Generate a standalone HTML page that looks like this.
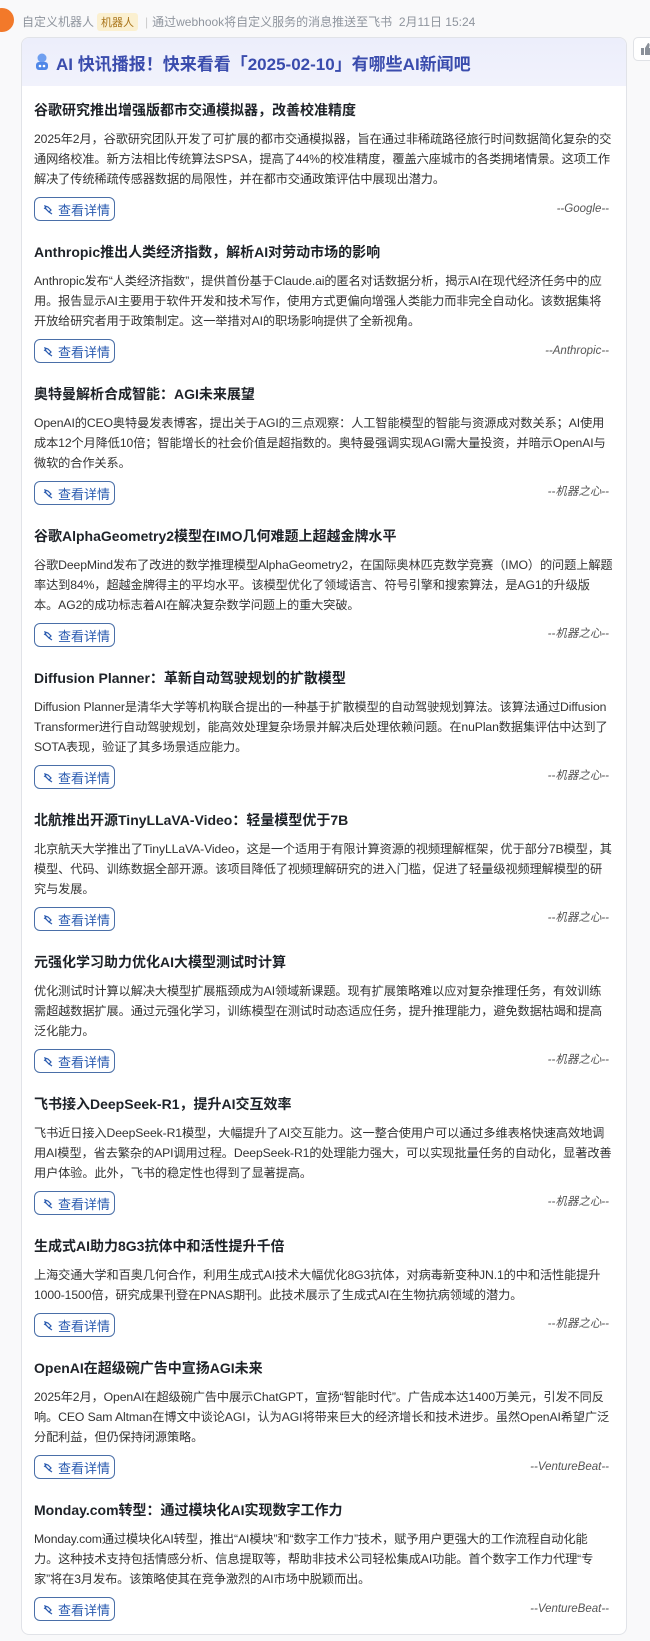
<!DOCTYPE html>
<html><head><meta charset="utf-8">
<style>
*{margin:0;padding:0;box-sizing:border-box}
body{width:650px;height:1641px;background:#f9f9fa;font-family:"Liberation Sans","Noto Sans CJK SC",sans-serif;position:relative;overflow:hidden;color:#1f2329}
.avatar{position:absolute;left:-10px;top:8px;width:24px;height:24px;border-radius:50%;background:#f2792a}
.meta{position:absolute;left:22px;top:13px;font-size:12px;color:#8f959e;white-space:nowrap}
.tag{display:inline-block;background:#fbf0d0;color:#a9741a;font-size:11px;padding:1px 4px;border-radius:3px;margin:0 3px}
.sep{color:#ccc;margin:0 4px}
.thumb{position:absolute;left:633px;top:37px;width:30px;height:24px;border:1px solid #e0e2e6;border-radius:5px;background:#fff}
.card{position:absolute;left:21px;top:37px;width:606px;height:1598px;background:#fff;border:1px solid #e1e3e8;border-radius:8px;overflow:hidden}
.hd{height:48px;background:linear-gradient(180deg,#eceefb,#f1f2fc);display:flex;align-items:center;padding-left:12px;font-size:17px;font-weight:bold;color:#3a4cad;white-space:nowrap}
.hd svg{margin-right:6px}
.ct{padding:15px 12px 0 12px}
.it{position:relative;margin-bottom:22px}
.t{font-size:14px;font-weight:bold;line-height:18px;white-space:nowrap;color:#1f2329}
.b{margin-top:10px;font-size:12.2px;line-height:20px;color:#333;white-space:nowrap;letter-spacing:-0.1px}
.btn{margin-top:8px;width:81px;height:24px;border:1px solid #4a6fa8;border-radius:6px;font-size:13px;display:flex;align-items:center;padding-left:8px;color:#2a5bb0}
.btn svg{margin-right:4px}
.src{position:absolute;right:5px;bottom:6px;font-size:11.5px;font-style:italic;color:#555}
</style></head><body>
<div class="avatar"></div>
<div class="meta">自定义机器人<span class="tag">机器人</span><span class="sep">|</span>通过webhook将自定义服务的消息推送至飞书&nbsp; 2月11日 15:24</div>
<div class="thumb"><svg width="14" height="14" viewBox="0 0 14 14" style="position:absolute;left:6px;top:4px"><path d="M1 6h3v7H1zM5 6l3-5c1 0 2 1 1.5 3L9 6h3.5c1 0 1.5 1 1.2 2l-1.5 4.5c-.2.5-.7.5-1.2.5H5z" fill="#8a9099"/></svg></div>
<div class="card">
<div class="hd"><svg width="16" height="18" viewBox="0 0 16 18"><circle cx="8" cy="5" r="4.5" fill="#6f9ff0"/><rect x="2" y="9" width="12" height="8" rx="3" fill="#4f87e8"/><circle cx="6" cy="13" r="1.3" fill="#fff"/><circle cx="10" cy="13" r="1.3" fill="#fff"/></svg>AI 快讯播报！快来看看「2025-02-10」有哪些AI新闻吧</div>
<div class="ct">

<div class="it"><div class="t">谷歌研究推出增强版都市交通模拟器，改善校准精度</div><div class="b">2025年2月，谷歌研究团队开发了可扩展的都市交通模拟器，旨在通过非稀疏路径旅行时间数据简化复杂的交<br>通网络校准。新方法相比传统算法SPSA，提高了44%的校准精度，覆盖六座城市的各类拥堵情景。这项工作<br>解决了传统稀疏传感器数据的局限性，并在都市交通政策评估中展现出潜力。</div><div class="btn"><svg width="11" height="11" viewBox="0 0 11 11" fill="none" stroke="#2a5bb0" stroke-width="1.2"><path d="M2 2l3 1 3 3-2 2-3-3zM6 8l3 2M3 5L1 4"/></svg>查看详情</div><div class="src">--Google--</div></div>

<div class="it"><div class="t">Anthropic推出人类经济指数，解析AI对劳动市场的影响</div><div class="b">Anthropic发布“人类经济指数”，提供首份基于Claude.ai的匿名对话数据分析，揭示AI在现代经济任务中的应<br>用。报告显示AI主要用于软件开发和技术写作，使用方式更偏向增强人类能力而非完全自动化。该数据集将<br>开放给研究者用于政策制定。这一举措对AI的职场影响提供了全新视角。</div><div class="btn"><svg width="11" height="11" viewBox="0 0 11 11" fill="none" stroke="#2a5bb0" stroke-width="1.2"><path d="M2 2l3 1 3 3-2 2-3-3zM6 8l3 2M3 5L1 4"/></svg>查看详情</div><div class="src">--Anthropic--</div></div>

<div class="it"><div class="t">奥特曼解析合成智能：AGI未来展望</div><div class="b">OpenAI的CEO奥特曼发表博客，提出关于AGI的三点观察：人工智能模型的智能与资源成对数关系；AI使用<br>成本12个月降低10倍；智能增长的社会价值是超指数的。奥特曼强调实现AGI需大量投资，并暗示OpenAI与<br>微软的合作关系。</div><div class="btn"><svg width="11" height="11" viewBox="0 0 11 11" fill="none" stroke="#2a5bb0" stroke-width="1.2"><path d="M2 2l3 1 3 3-2 2-3-3zM6 8l3 2M3 5L1 4"/></svg>查看详情</div><div class="src">--机器之心--</div></div>

<div class="it"><div class="t">谷歌AlphaGeometry2模型在IMO几何难题上超越金牌水平</div><div class="b">谷歌DeepMind发布了改进的数学推理模型AlphaGeometry2，在国际奥林匹克数学竞赛（IMO）的问题上解题<br>率达到84%，超越金牌得主的平均水平。该模型优化了领域语言、符号引擎和搜索算法，是AG1的升级版<br>本。AG2的成功标志着AI在解决复杂数学问题上的重大突破。</div><div class="btn"><svg width="11" height="11" viewBox="0 0 11 11" fill="none" stroke="#2a5bb0" stroke-width="1.2"><path d="M2 2l3 1 3 3-2 2-3-3zM6 8l3 2M3 5L1 4"/></svg>查看详情</div><div class="src">--机器之心--</div></div>

<div class="it"><div class="t">Diffusion Planner：革新自动驾驶规划的扩散模型</div><div class="b">Diffusion Planner是清华大学等机构联合提出的一种基于扩散模型的自动驾驶规划算法。该算法通过Diffusion<br>Transformer进行自动驾驶规划，能高效处理复杂场景并解决后处理依赖问题。在nuPlan数据集评估中达到了<br>SOTA表现，验证了其多场景适应能力。</div><div class="btn"><svg width="11" height="11" viewBox="0 0 11 11" fill="none" stroke="#2a5bb0" stroke-width="1.2"><path d="M2 2l3 1 3 3-2 2-3-3zM6 8l3 2M3 5L1 4"/></svg>查看详情</div><div class="src">--机器之心--</div></div>

<div class="it"><div class="t">北航推出开源TinyLLaVA-Video：轻量模型优于7B</div><div class="b">北京航天大学推出了TinyLLaVA-Video，这是一个适用于有限计算资源的视频理解框架，优于部分7B模型，其<br>模型、代码、训练数据全部开源。该项目降低了视频理解研究的进入门槛，促进了轻量级视频理解模型的研<br>究与发展。</div><div class="btn"><svg width="11" height="11" viewBox="0 0 11 11" fill="none" stroke="#2a5bb0" stroke-width="1.2"><path d="M2 2l3 1 3 3-2 2-3-3zM6 8l3 2M3 5L1 4"/></svg>查看详情</div><div class="src">--机器之心--</div></div>

<div class="it"><div class="t">元强化学习助力优化AI大模型测试时计算</div><div class="b">优化测试时计算以解决大模型扩展瓶颈成为AI领域新课题。现有扩展策略难以应对复杂推理任务，有效训练<br>需超越数据扩展。通过元强化学习，训练模型在测试时动态适应任务，提升推理能力，避免数据枯竭和提高<br>泛化能力。</div><div class="btn"><svg width="11" height="11" viewBox="0 0 11 11" fill="none" stroke="#2a5bb0" stroke-width="1.2"><path d="M2 2l3 1 3 3-2 2-3-3zM6 8l3 2M3 5L1 4"/></svg>查看详情</div><div class="src">--机器之心--</div></div>

<div class="it"><div class="t">飞书接入DeepSeek-R1，提升AI交互效率</div><div class="b">飞书近日接入DeepSeek-R1模型，大幅提升了AI交互能力。这一整合使用户可以通过多维表格快速高效地调<br>用AI模型，省去繁杂的API调用过程。DeepSeek-R1的处理能力强大，可以实现批量任务的自动化，显著改善<br>用户体验。此外，飞书的稳定性也得到了显著提高。</div><div class="btn"><svg width="11" height="11" viewBox="0 0 11 11" fill="none" stroke="#2a5bb0" stroke-width="1.2"><path d="M2 2l3 1 3 3-2 2-3-3zM6 8l3 2M3 5L1 4"/></svg>查看详情</div><div class="src">--机器之心--</div></div>

<div class="it"><div class="t">生成式AI助力8G3抗体中和活性提升千倍</div><div class="b">上海交通大学和百奥几何合作，利用生成式AI技术大幅优化8G3抗体，对病毒新变种JN.1的中和活性能提升<br>1000-1500倍，研究成果刊登在PNAS期刊。此技术展示了生成式AI在生物抗病领域的潜力。</div><div class="btn"><svg width="11" height="11" viewBox="0 0 11 11" fill="none" stroke="#2a5bb0" stroke-width="1.2"><path d="M2 2l3 1 3 3-2 2-3-3zM6 8l3 2M3 5L1 4"/></svg>查看详情</div><div class="src">--机器之心--</div></div>

<div class="it"><div class="t">OpenAI在超级碗广告中宣扬AGI未来</div><div class="b">2025年2月，OpenAI在超级碗广告中展示ChatGPT，宣扬“智能时代”。广告成本达1400万美元，引发不同反<br>响。CEO Sam Altman在博文中谈论AGI，认为AGI将带来巨大的经济增长和技术进步。虽然OpenAI希望广泛<br>分配利益，但仍保持闭源策略。</div><div class="btn"><svg width="11" height="11" viewBox="0 0 11 11" fill="none" stroke="#2a5bb0" stroke-width="1.2"><path d="M2 2l3 1 3 3-2 2-3-3zM6 8l3 2M3 5L1 4"/></svg>查看详情</div><div class="src">--VentureBeat--</div></div>

<div class="it"><div class="t">Monday.com转型：通过模块化AI实现数字工作力</div><div class="b">Monday.com通过模块化AI转型，推出“AI模块”和“数字工作力”技术，赋予用户更强大的工作流程自动化能<br>力。这种技术支持包括情感分析、信息提取等，帮助非技术公司轻松集成AI功能。首个数字工作力代理“专<br>家”将在3月发布。该策略使其在竞争激烈的AI市场中脱颖而出。</div><div class="btn"><svg width="11" height="11" viewBox="0 0 11 11" fill="none" stroke="#2a5bb0" stroke-width="1.2"><path d="M2 2l3 1 3 3-2 2-3-3zM6 8l3 2M3 5L1 4"/></svg>查看详情</div><div class="src">--VentureBeat--</div></div>

</div></div>
</body></html>
